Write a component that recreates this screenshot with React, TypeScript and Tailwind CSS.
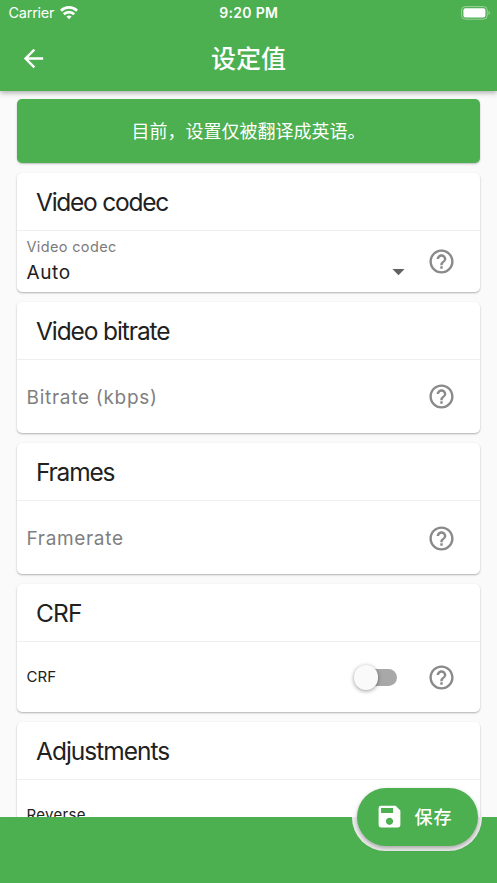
import React from 'react';
import { MdArrowBack, MdArrowDropDown, MdHelpOutline, MdSave } from 'react-icons/md';

const WifiIcon: React.FC = () => (
  <svg width="18" height="14" viewBox="0 0 18 14" fill="none" stroke="white" strokeWidth="2.7">
    <path d="M0.9 4.7a11.6 11.6 0 0 1 16.2 0" />
    <path d="M3.8 8.2a7.4 7.4 0 0 1 10.4 0" />
    <path d="M9 13.2L6.4 10.6a3.8 3.8 0 0 1 5.2 0z" fill="white" stroke="none" />
  </svg>
);

const BatteryIcon: React.FC = () => (
  <svg width="30" height="14" viewBox="0 0 30 14" fill="none">
    <rect x="0.6" y="0.6" width="25.6" height="12.6" rx="3.6" stroke="white" strokeOpacity="0.45" />
    <rect x="2.4" y="2.3" width="22" height="9.2" rx="2" fill="white" />
    <path d="M27.6 4.8c1.6.6 1.6 3.6 0 4.2z" fill="white" fillOpacity="0.5" />
  </svg>
);

const StatusBar: React.FC = () => (
  <div className="grid h-[25px] grid-cols-3 items-center pl-[8.5px] pr-[6px] text-white">
    <div className="flex items-center gap-[6px] text-[14.5px] tracking-[-0.25px]">
      Carrier <WifiIcon />
    </div>
    <div className="whitespace-nowrap pr-[2px] text-center text-[14px] font-semibold tracking-[0.3px]">9:20 PM</div>
    <div className="flex justify-end">
      <BatteryIcon />
    </div>
  </div>
);

const Header: React.FC = () => (
  <header className="relative z-10 h-[91px] shrink-0 bg-[#4caf50] shadow-[0_2px_5px_rgba(0,0,0,0.3)]">
    <StatusBar />
    <div className="grid h-[66px] grid-cols-[67px_1fr_67px] items-center text-white">
      <button className="flex justify-center">
        <MdArrowBack size={29} />
      </button>
      <h1 className="pt-[2px] text-center text-[25px] font-medium leading-none">设定值</h1>
    </div>
  </header>
);

interface CardProps {
  title: string;
  titleClass: string;
  bodyClass: string;
  children: React.ReactNode;
}

const Card: React.FC<CardProps> = ({ title, titleClass, bodyClass, children }) => (
  <section className="shrink-0 rounded-[5px] bg-white shadow-[0_1px_2px_rgba(0,0,0,0.3)]">
    <h2 className="h-[58.5px] border-b border-[#eeeeee] pl-[19px] text-[24.5px] leading-[59px] text-[#212121]">
      <span className={titleClass}>{title}</span>
    </h2>
    <div className={`flex items-center pl-[9.5px] pr-6 ${bodyClass}`}>{children}</div>
  </section>
);

const HelpButton: React.FC = () => (
  <button className="text-[#8a8a8a]">
    <MdHelpOutline size={29} />
  </button>
);

const Toggle: React.FC = () => (
  <div className="mr-[30px] flex h-[17px] w-[42px] items-center rounded-full bg-[#a8a8a8]">
    <div className="-ml-[1.5px] size-[24.5px] shrink-0 rounded-full bg-[#fafafa] shadow-[0_1px_4px_rgba(0,0,0,0.4)]" />
  </div>
);

const SaveButton: React.FC = () => (
  <button className="absolute left-[356.5px] top-[788px] z-30 flex h-[57.5px] w-[121px] items-center rounded-full bg-[#4caf50] pl-[18.5px] text-white shadow-[0_2px_4px_rgba(0,0,0,0.3)]">
    <MdSave size={29} />
    <span className="ml-[10.5px] pt-px text-[18px] font-medium tracking-[1px]">保存</span>
  </button>
);

export default function App() {
  return (
    <div className="relative flex h-[883px] w-[497px] flex-col overflow-hidden bg-[#fafafa] font-['Inter','Noto_Sans_CJK_SC',sans-serif]">
      <Header />

      <main className="flex min-h-0 flex-1 flex-col gap-[9.5px] overflow-hidden px-[17px] pt-2">
        <div className="flex h-16 shrink-0 items-center justify-center rounded-[5px] bg-[#4caf50] pt-px text-[18px] text-white shadow-[0_1px_2px_rgba(0,0,0,0.25)]">
          目前，设置仅被翻译成英语。
        </div>

        <Card title="Video codec" titleClass="tracking-[-1.25px]" bodyClass="h-[61px]">
          <div className="flex-1">
            <div className="pt-px text-[14.5px] leading-[20px] tracking-[0.35px] text-[#7b7b7b]">Video codec</div>
            <div className="flex items-center justify-between pr-[14.5px]">
              <span className="pt-px text-[19px] leading-[30px] tracking-[0.6px] text-[#212121]">Auto</span>
              <MdArrowDropDown size={29} className="mb-px text-[#616161]" />
            </div>
          </div>
          <HelpButton />
        </Card>

        <Card title="Video bitrate" titleClass="tracking-[-1.1px]" bodyClass="h-[73px]">
          <span className="flex-1 pt-[3px] text-[19px] tracking-[0.72px] text-[#7f7f7f]">Bitrate (kbps)</span>
          <HelpButton />
        </Card>

        <Card title="Frames" titleClass="tracking-[-1.2px]" bodyClass="h-[73px] pt-px">
          <span className="flex-1 pt-[2px] text-[19px] tracking-[0.67px] text-[#7f7f7f]">Framerate</span>
          <HelpButton />
        </Card>

        <Card title="CRF" titleClass="tracking-[-0.8px]" bodyClass="h-[70px] pt-px">
          <span className="flex-1 text-[15px] tracking-[0.1px] text-[#212121]">CRF</span>
          <Toggle />
          <HelpButton />
        </Card>

        <Card title="Adjustments" titleClass="tracking-[-1px]" bodyClass="h-[70px] pt-px">
          <span className="flex-1 text-[15px] tracking-[0.3px] text-[#212121]">Reverse</span>
          <HelpButton />
        </Card>
      </main>

      {/* Bottom bar with the notch around the save button */}
      <footer className="relative z-20 h-[66px] shrink-0 bg-[#4caf50]">
        <div className="absolute left-[351.5px] top-0 h-[33.5px] w-[130.5px] overflow-hidden">
          <div className="-mt-[33.5px] h-[67px] rounded-full bg-[#ececec]" />
        </div>
      </footer>
      <SaveButton />
    </div>
  );
}
